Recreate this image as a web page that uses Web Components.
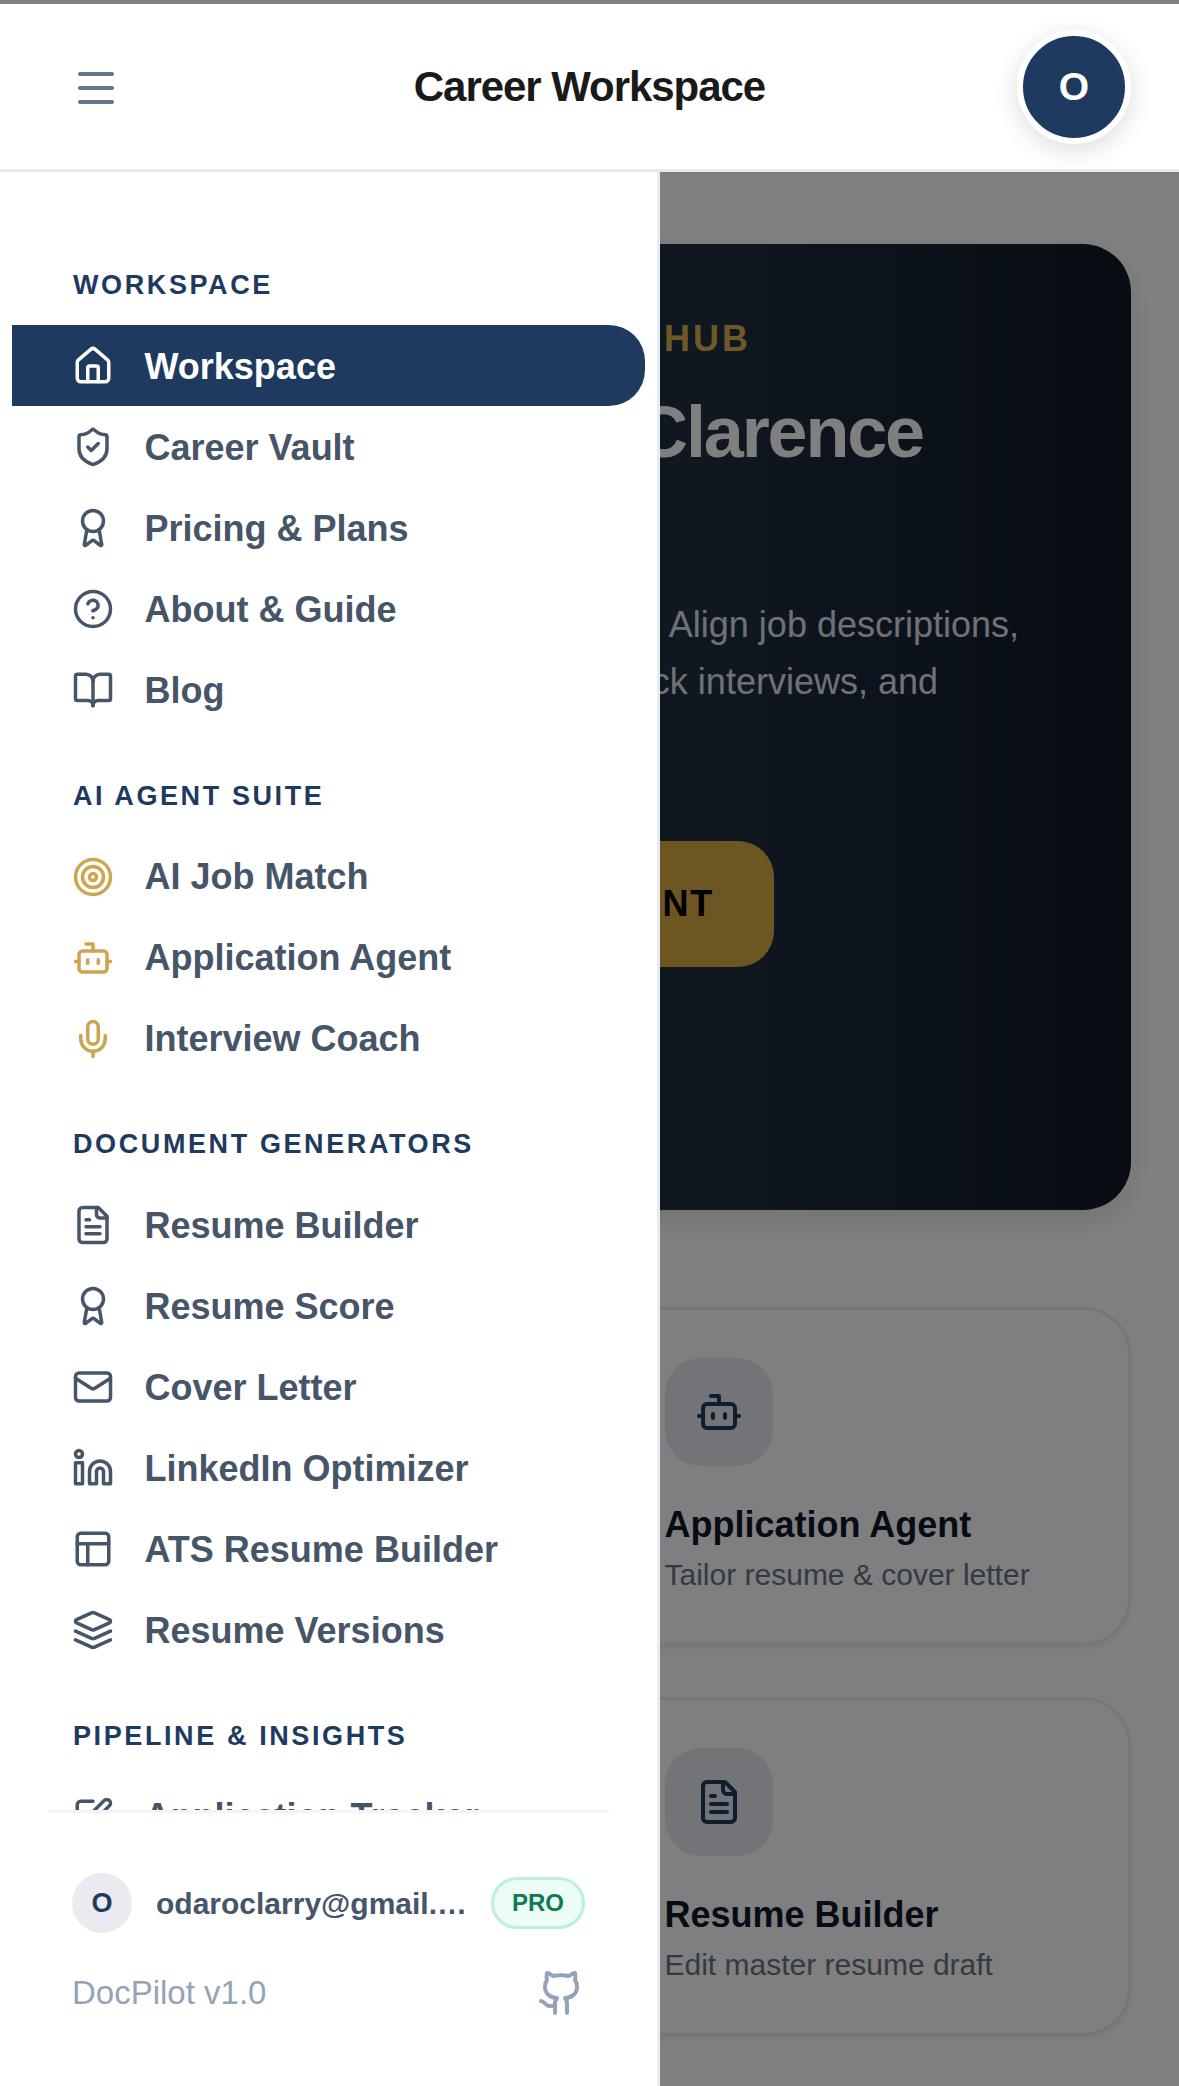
<!DOCTYPE html>
<html lang="en">
<head>
<meta charset="utf-8">
<title>Career Workspace</title>
<style>
  html, body { margin: 0; padding: 0; background: #fff; }
  body { font-family: "Liberation Sans", Arial, sans-serif; width: 1179px; height: 2086px; overflow: hidden; }
</style>
</head>
<body>
<app-root>
  <app-header slot="header" title-text="Career Workspace" initial="O"></app-header>
  <app-main slot="main">
    <hero-card></hero-card>
    <card-grid>
      <div></div>
      <tool-card icon="bot" name="Application Agent" desc="Tailor resume &amp; cover letter"></tool-card>
      <div></div>
      <tool-card icon="file" name="Resume Builder" desc="Edit master resume draft"></tool-card>
    </card-grid>
  </app-main>
  <app-drawer slot="drawer">
    <nav-section label="WORKSPACE">
      <nav-item icon="house" active>Workspace</nav-item>
      <nav-item icon="shield">Career Vault</nav-item>
      <nav-item icon="award">Pricing &amp; Plans</nav-item>
      <nav-item icon="help">About &amp; Guide</nav-item>
      <nav-item icon="book">Blog</nav-item>
    </nav-section>
    <nav-section label="AI AGENT SUITE">
      <nav-item icon="target" gold>AI Job Match</nav-item>
      <nav-item icon="bot" gold>Application Agent</nav-item>
      <nav-item icon="mic" gold>Interview Coach</nav-item>
    </nav-section>
    <nav-section label="DOCUMENT GENERATORS">
      <nav-item icon="file">Resume Builder</nav-item>
      <nav-item icon="award">Resume Score</nav-item>
      <nav-item icon="mail">Cover Letter</nav-item>
      <nav-item icon="linkedin">LinkedIn Optimizer</nav-item>
      <nav-item icon="layout">ATS Resume Builder</nav-item>
      <nav-item icon="layers">Resume Versions</nav-item>
    </nav-section>
    <nav-section label="PIPELINE &amp; INSIGHTS">
      <nav-item icon="pen">Application Tracker</nav-item>
    </nav-section>
    <drawer-footer slot="footer" email="odaroclarry@gmail.com" version="DocPilot v1.0"></drawer-footer>
  </app-drawer>
</app-root>

<script>
const ICONS = {
  house: '<path d="M15 21v-8a1 1 0 0 0-1-1h-4a1 1 0 0 0-1 1v8"/><path d="M3 10a2 2 0 0 1 .709-1.528l7-5.999a2 2 0 0 1 2.582 0l7 5.999A2 2 0 0 1 21 10v9a2 2 0 0 1-2 2H5a2 2 0 0 1-2-2z"/>',
  shield: '<path d="M20 13c0 5-3.5 7.5-7.66 8.95a1 1 0 0 1-.67-.01C7.5 20.5 4 18 4 13V6a1 1 0 0 1 1-1c2 0 4.5-1.2 6.24-2.72a1.17 1.17 0 0 1 1.52 0C14.51 3.81 17 5 19 5a1 1 0 0 1 1 1z"/><path d="m9 12 2 2 4-4"/>',
  award: '<path d="m15.477 12.89 1.515 8.526a.5.5 0 0 1-.81.47l-3.58-2.687a1 1 0 0 0-1.197 0l-3.586 2.686a.5.5 0 0 1-.81-.469l1.514-8.526"/><circle cx="12" cy="8" r="6"/>',
  help: '<circle cx="12" cy="12" r="10"/><path d="M9.09 9a3 3 0 0 1 5.83 1c0 2-3 3-3 3"/><path d="M12 17h.01"/>',
  book: '<path d="M12 7v14"/><path d="M3 18a1 1 0 0 1-1-1V4a1 1 0 0 1 1-1h5a4 4 0 0 1 4 4 4 4 0 0 1 4-4h5a1 1 0 0 1 1 1v13a1 1 0 0 1-1 1h-6a3 3 0 0 0-3 3 3 3 0 0 0-3-3z"/>',
  target: '<circle cx="12" cy="12" r="10"/><circle cx="12" cy="12" r="6"/><circle cx="12" cy="12" r="2"/>',
  bot: '<path d="M12 8V4H8"/><rect width="16" height="12" x="4" y="8" rx="2"/><path d="M2 14h2"/><path d="M20 14h2"/><path d="M15 13v2"/><path d="M9 13v2"/>',
  mic: '<path d="M12 19v3"/><path d="M19 10v2a7 7 0 0 1-14 0v-2"/><rect x="9" y="2" width="6" height="13" rx="3"/>',
  file: '<path d="M15 2H6a2 2 0 0 0-2 2v16a2 2 0 0 0 2 2h12a2 2 0 0 0 2-2V7Z"/><path d="M14 2v4a2 2 0 0 0 2 2h4"/><path d="M10 9H8"/><path d="M16 13H8"/><path d="M16 17H8"/>',
  mail: '<rect width="20" height="16" x="2" y="4" rx="2"/><path d="m22 7-8.97 5.7a1.94 1.94 0 0 1-2.06 0L2 7"/>',
  linkedin: '<path d="M16 8a6 6 0 0 1 6 6v7h-4v-7a2 2 0 0 0-2-2 2 2 0 0 0-2 2v7h-4v-7a6 6 0 0 1 6-6z"/><rect width="4" height="12" x="2" y="9"/><circle cx="4" cy="4" r="2"/>',
  layout: '<rect width="18" height="18" x="3" y="3" rx="2"/><path d="M3 9h18"/><path d="M9 21V9"/>',
  layers: '<path d="m12.83 2.18a2 2 0 0 0-1.66 0L2.6 6.08a1 1 0 0 0 0 1.83l8.58 3.91a2 2 0 0 0 1.66 0l8.58-3.9a1 1 0 0 0 0-1.83Z"/><path d="m22 17.65-9.17 4.16a2 2 0 0 1-1.66 0L2 17.65"/><path d="m22 12.65-9.17 4.16a2 2 0 0 1-1.66 0L2 12.65"/>',
  pen: '<path d="M12 3H5a2 2 0 0 0-2 2v14a2 2 0 0 0 2 2h14a2 2 0 0 0 2-2v-7"/><path d="M18.375 2.625a1 1 0 0 1 3 3l-9.013 9.014a2 2 0 0 1-.853.505l-2.873.84a.5.5 0 0 1-.62-.62l.84-2.873a2 2 0 0 1 .506-.852z"/>',
  github: '<path d="M15 22v-4a4.8 4.8 0 0 0-1-3.5c3 0 6-2 6-5.5.08-1.25-.27-2.48-1-3.5.28-1.15.28-2.35 0-3.5 0 0-1 0-3 1.5-2.64-.5-5.36-.5-8 0C6 2 5 2 5 2c-.3 1.15-.3 2.35 0 3.5A5.403 5.403 0 0 0 4 9c0 3.5 3 5.5 6 5.5-.39.49-.68 1.05-.85 1.65-.17.6-.22 1.23-.15 1.85v4"/><path d="M9 18c-4.51 2-5-2-7-2"/>'
};
const svg = (name, size) => `<svg xmlns="http://www.w3.org/2000/svg" width="${size}" height="${size}" viewBox="0 0 24 24" fill="none" stroke="currentColor" stroke-width="2" stroke-linecap="round" stroke-linejoin="round" style="display:block;flex:none">${ICONS[name]}</svg>`;
const esc = s => String(s).replace(/&/g, '&amp;').replace(/</g, '&lt;');
function def(tag, render) {
  customElements.define(tag, class extends HTMLElement {
    connectedCallback() {
      if (this.shadowRoot) return;
      this.attachShadow({ mode: 'open' }).innerHTML = render(this);
    }
  });
}

def('app-root', () => `<style>
  :host { display: block; position: relative; width: 1179px; height: 2086px; overflow: hidden; background: #fff; }
  .strip { height: 4px; background: #808080; }
  .stage { position: relative; height: 1914px; overflow: hidden; }
  .scrim { position: absolute; inset: 0; background: rgba(0,0,0,.5); }
  .drawer { position: absolute; top: 0; left: 0; bottom: 0; width: 660px; display: flex; }
</style>
<div class="strip"></div>
<slot name="header"></slot>
<div class="stage">
  <slot name="main"></slot>
  <div class="scrim"></div>
  <div class="drawer"><slot name="drawer"></slot></div>
</div>`);

def('app-header', el => `<style>
  :host { display: block; background: #fff; border-bottom: 3px solid #e6eaf0; height: 165px; }
  .bar { height: 165px; display: grid; grid-template-columns: 1fr auto 1fr; align-items: center; padding: 0 48px; }
  .menu { width: 36px; margin-left: 30px; display: flex; flex-direction: column; gap: 10px; margin-top: 2px; }
  .menu i { display: block; height: 4px; border-radius: 2px; background: #64748b; }
  h1 { margin: 0; font: 700 42px/54px "Liberation Sans", Arial, sans-serif; letter-spacing: -1.05px; color: #1a1a1a; white-space: nowrap; }
  .wrap { justify-self: end; }
  .av { width: 102px; height: 102px; border-radius: 50%; background: #1e3a5f; border: 6px solid #fff; box-shadow: 0 6px 24px rgba(0,0,0,.14);
        display: flex; align-items: center; justify-content: center; color: #fff; font: 700 39px/1 "Liberation Sans", Arial, sans-serif; }
</style>
<div class="bar">
  <div class="menu"><i></i><i></i><i></i></div>
  <h1>${esc(el.getAttribute('title-text'))}</h1>
  <div class="wrap"><div class="av">${esc(el.getAttribute('initial'))}</div></div>
</div>`);

def('app-main', () => `<style>
  :host { display: block; padding: 72px 48px 0; background: #fff; }
</style><slot></slot>`);

def('hero-card', () => `<style>
  :host { display: flex; flex-direction: column; align-items: flex-end; height: 966px; box-sizing: border-box; padding: 74px 0 0; border-radius: 48px;
          background: linear-gradient(90deg, #203044 0%, #1f2f43 60%, #111a28 100%); box-shadow: 0 10px 24px rgba(0,0,0,.1); overflow: hidden;
          font-family: "Liberation Sans", Arial, sans-serif; }
  .eyebrow { margin-right: 380px; font: 700 36px/42px "Liberation Sans", Arial, sans-serif; letter-spacing: 3px; color: #dcb04e; white-space: nowrap; }
  h2 { margin: 30px 208px 0 0; font: 700 72px/84px "Liberation Sans", Arial, sans-serif; letter-spacing: -2.16px; color: #fff; white-space: nowrap; }
  p { margin: 0; font: 400 36px/57px "Liberation Sans", Arial, sans-serif; color: #dfe3ea; white-space: nowrap; }
  .l1 { margin-top: 122px; margin-right: 112px; }
  .l2 { margin-right: 193px; }
  .btn { margin-top: 131px; margin-right: 357px; height: 126px; padding: 0 60px 0 60px; display: flex; align-items: center; border-radius: 36px;
         background: #dcac44; color: #000; font: 700 36px/1 "Liberation Sans", Arial, sans-serif; letter-spacing: 1.8px; white-space: nowrap; }
</style>
<div class="eyebrow">CAREER HUB</div>
<h2>Hi, Clarence</h2>
<p class="l1">Your hub. Align job descriptions,</p>
<p class="l2">run mock interviews, and</p>
<div class="btn">OPEN AGENT</div>`);

def('card-grid', () => `<style>
  :host { display: grid; grid-template-columns: 1fr 1fr; gap: 51px 48px; margin-top: 97px; }
</style><slot></slot>`);

def('tool-card', el => `<style>
  :host { display: block; box-sizing: border-box; border: 3px solid #e8ecf2; border-radius: 48px; background: #fff; padding: 48px; height: 339px; box-shadow: 0 3px 6px rgba(0,0,0,.05);
          font-family: "Liberation Sans", Arial, sans-serif; }
  .tile { width: 108px; height: 108px; border-radius: 36px; background: #e6e9ee; color: #1e3a5f; display: flex; align-items: center; justify-content: center; }
  h3 { margin: 32px 0 2px; font: 700 36px/54px "Liberation Sans", Arial, sans-serif; color: #0f172a; white-space: nowrap; }
  p { margin: 0; font: 400 30px/42px "Liberation Sans", Arial, sans-serif; color: #64748b; white-space: nowrap; }
</style>
<div class="tile">${svg(el.getAttribute('icon'), 48)}</div>
<h3>${esc(el.getAttribute('name'))}</h3>
<p>${esc(el.getAttribute('desc'))}</p>`);

def('app-drawer', () => `<style>
  :host { display: flex; flex-direction: column; width: 660px; box-sizing: border-box; background: #fff; border-right: 3px solid #e8edf4; }
  .scroll { flex: 1; min-height: 0; overflow: hidden; padding-top: 97px; }
</style>
<div class="scroll"><slot></slot></div>
<slot name="footer"></slot>`);

def('nav-section', el => `<style>
  :host { display: block; margin-bottom: 49.5px; }
  .label { margin: 0 0 25px; padding: 1px 0 0 73px; font: 700 27px/30px "Liberation Sans", Arial, sans-serif; letter-spacing: 2.6px; color: #1e3a5f; white-space: nowrap; }
</style>
<div class="label">${esc(el.getAttribute('label'))}</div>
<slot></slot>`);

def('nav-item', el => {
  const active = el.hasAttribute('active');
  const gold = el.hasAttribute('gold');
  return `<style>
  :host { display: flex; align-items: center; gap: 30.5px; height: 81px; box-sizing: border-box; margin: 0 12px; padding: 1px 0 0 60px; border-radius: 0 36px 36px 0;
          font: 700 36px/1 "Liberation Sans", Arial, sans-serif; white-space: nowrap;
          color: ${active ? '#fff' : '#475569'}; background: ${active ? '#1e3a5f' : 'transparent'}; }
  .ic { color: ${gold ? '#cda54f' : 'currentColor'}; }
  .tx { padding-top: 1px; }
</style>
<span class="ic">${svg(el.getAttribute('icon'), 42)}</span><span class="tx"><slot></slot></span>`;
});

def('drawer-footer', el => `<style>
  :host { display: block; flex: none; box-sizing: border-box; height: 276px; margin: 0 48px; padding: 60px 24px 0 24px; border-top: 3px solid #f1f5f9; background: #fff; font-family: "Liberation Sans", Arial, sans-serif; }
  .user { display: flex; align-items: center; }
  .av { flex: none; width: 60px; height: 60px; border-radius: 50%; background: #e9ebf0; color: #1e3a5f; display: flex; align-items: center; justify-content: center; font: 700 27px/1 "Liberation Sans", Arial, sans-serif; margin-right: 24px; }
  .email { flex: 1; min-width: 0; overflow: hidden; text-overflow: ellipsis; white-space: nowrap; padding-top: 2px; font: 700 30px/40px "Liberation Sans", Arial, sans-serif; color: #475569; margin-right: 18px; }
  .pro { flex: none; box-sizing: border-box; width: 94px; height: 52px; border-radius: 26px; border: 3px solid #bbf2d6; background: #ecfdf5; color: #0f7a53; display: flex; align-items: center; justify-content: center; font: 700 24px/1 "Liberation Sans", Arial, sans-serif; }
  .ver { display: flex; align-items: center; justify-content: space-between; margin-top: 36px; color: #94a3b8; font: 400 33px/48px "Liberation Sans", Arial, sans-serif; }
</style>
<div class="user">
  <div class="av">O</div>
  <div class="email">${esc(el.getAttribute('email'))}</div>
  <div class="pro">PRO</div>
</div>
<div class="ver"><span>${esc(el.getAttribute('version'))}</span>${svg('github', 48)}</div>`);
</script>
</body>
</html>
